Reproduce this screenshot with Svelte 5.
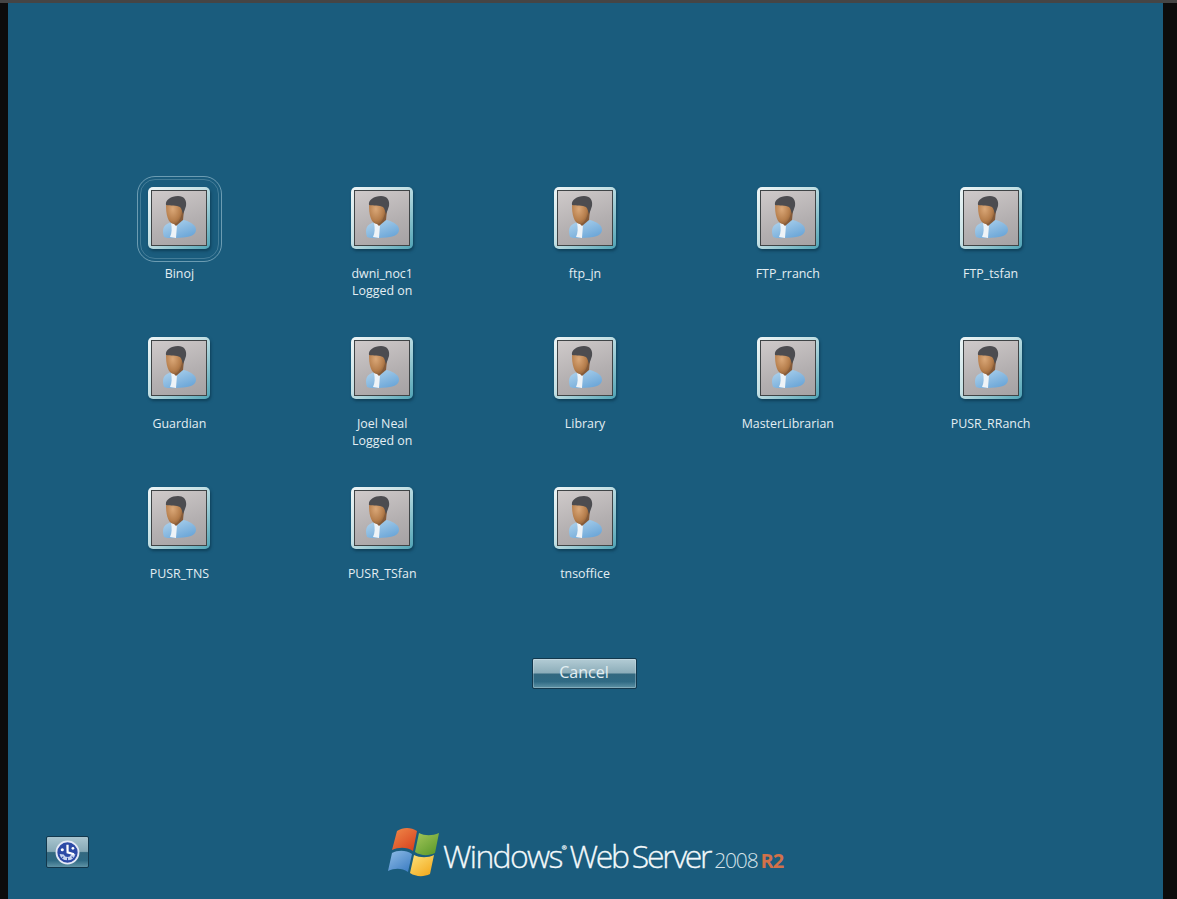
<script lang="ts">
  const users = [
    { name: 'Binoj', focused: true },
    { name: 'dwni_noc1', status: 'Logged on' },
    { name: 'ftp_jn' },
    { name: 'FTP_rranch' },
    { name: 'FTP_tsfan' },
    { name: 'Guardian' },
    { name: 'Joel Neal', status: 'Logged on' },
    { name: 'Library' },
    { name: 'MasterLibrarian' },
    { name: 'PUSR_RRanch' },
    { name: 'PUSR_TNS' },
    { name: 'PUSR_TSfan' },
    { name: 'tnsoffice' },
  ]
</script>

<div class="screen">
  <main class="desktop">
    <ul class="users">
      {#each users as user}
        <li class="user">
          <div class="tile" class:focused={user.focused}>
            <div class="picture">
              <svg viewBox="0 0 54 54" width="54" height="54" aria-hidden="true">
                <defs>
                  <radialGradient id="skin" cx="0.4" cy="0.42" r="0.7">
                    <stop offset="0" stop-color="#dba878" />
                    <stop offset="0.65" stop-color="#b57d4b" />
                    <stop offset="1" stop-color="#7d5533" />
                  </radialGradient>
                  <linearGradient id="shirt" x1="0" y1="0" x2="0.7" y2="1">
                    <stop offset="0" stop-color="#b4d6ee" />
                    <stop offset="1" stop-color="#6ba6d8" />
                  </linearGradient>
                </defs>
                <path d="M12 46c-2-6-1-11 3-13l6-3 11-1c7 2 12 5 12 10 0 3-3 6-9 7-8 1-19 2-23 0z" fill="url(#shirt)" />
                <path d="M19 32l4-1 2 3-1 13-6-1c2-4 2-9 1-14z" fill="#eef3f7" />
                <path d="M20 22l12-3-1 10-7 6-4-4z" fill="#855a38" />
                <path d="M14 15c0-5 4-8 9-8 5 0 8 4 8 10-1 8-4 16-9 16-6 0-8-10-8-18z" fill="url(#skin)" />
                <path d="M14 14c-1-5 5-9 12-9 6 0 9 4 8 10-1 3-2 6-3 8-1-3-1-5-3-7-3-2-10-1-14-2z" fill="#4c4c50" />
              </svg>
            </div>
          </div>
          <div class="name">{user.name}</div>
          {#if user.status}
            <div class="status">{user.status}</div>
          {/if}
        </li>
      {/each}
    </ul>

    <div class="actions">
      <button type="button" class="cancel">Cancel</button>
    </div>

    <footer class="footer">
      <button type="button" class="ease" aria-label="Ease of access">
        <svg viewBox="0 0 24 24" width="25" height="25" aria-hidden="true">
          <circle cx="12" cy="12" r="10.6" fill="#2d4aa6" stroke="#e4e9f6" stroke-width="1.7" />
          <path d="M4.4 13.4a7.8 7.8 0 0 0 15.2 0l-4 .4a3.9 3.9 0 0 1-7.2 0z" fill="#c9d5ef" />
          <path d="M8 16l-2 2M12 17v3M16 16l2 2" stroke="#2d4aa6" stroke-width="1" />
          <path d="M10.9 4.6h2.2v6.5l5.4 1.6-.6 2-6.8-2.1c-.1-3-.2-5-.2-8z" fill="#fff" />
          <circle cx="7" cy="9.4" r="1.5" fill="#fff" />
          <circle cx="17.2" cy="8" r="1.3" fill="#fff" />
        </svg>
      </button>
      <div class="brand">
        <svg class="flag" viewBox="0 0 52 50" width="52" height="50" aria-hidden="true">
          <defs>
            <linearGradient id="red" x1="0" y1="0" x2="0.8" y2="1">
              <stop offset="0" stop-color="#f08a4a" />
              <stop offset="1" stop-color="#d8431f" />
            </linearGradient>
            <linearGradient id="green" x1="0" y1="0" x2="0.8" y2="1">
              <stop offset="0" stop-color="#a4c75a" />
              <stop offset="1" stop-color="#5d9a2c" />
            </linearGradient>
            <linearGradient id="blue" x1="0" y1="0" x2="0.8" y2="1">
              <stop offset="0" stop-color="#8fbce6" />
              <stop offset="1" stop-color="#3f7fc4" />
            </linearGradient>
            <linearGradient id="yellow" x1="0" y1="0" x2="0.8" y2="1">
              <stop offset="0" stop-color="#fde27a" />
              <stop offset="1" stop-color="#f2a91f" />
            </linearGradient>
          </defs>
          <path d="M9 4c6-4 14-4 20 0l-4 20c-6-4-14-4-21-1z" fill="url(#red)" />
          <path d="M31 6c6 3 13 3 20 0l-4 20c-6 3-14 3-20-1z" fill="url(#green)" />
          <path d="M4 26c6-3 14-3 20 1l-4 18c-6-4-13-4-20-1z" fill="url(#blue)" />
          <path d="M26 28c6 3 14 3 20 0l-4 19c-6 3-14 3-20-1z" fill="url(#yellow)" />
        </svg>
        <span class="product">Windows<sup>®</sup> <span class="server">Web Server</span></span>
        <span class="year">2008</span>
        <span class="release">R2</span>
      </div>
    </footer>
  </main>
</div>

<style>
  :global(body) {
    margin: 0;
    background: #0c0c0c;
  }

  .screen {
    height: 899px;
    box-sizing: border-box;
    border-top: 3px solid #454545;
    padding: 0 14px 0 8px;
    overflow: hidden;
  }

  .desktop {
    height: 896px;
    display: flex;
    flex-direction: column;
    background: #1a5c7d;
    color: #fff;
    font-family: 'Open Sans', 'Noto Sans', sans-serif;
  }

  .users {
    list-style: none;
    margin: 0;
    padding: 184px 0 0 70px;
    display: grid;
    grid-template-columns: repeat(5, 202.8px);
    grid-auto-rows: 150px;
  }

  .user {
    display: flex;
    flex-direction: column;
    align-items: center;
    font-size: 12.4px;
    line-height: 17px;
    color: #e4eef3;
  }

  .tile {
    position: relative;
    width: 62px;
    height: 62px;
    box-sizing: border-box;
    padding: 4px;
    border-radius: 5px;
    background: linear-gradient(135deg, #eef5f6 0%, #c4e0e4 45%, #4fa3b5 100%);
    box-shadow: 1px 2px 3px rgba(6, 40, 58, 0.55);
  }

  .tile.focused::before,
  .tile.focused::after {
    content: '';
    position: absolute;
    border: 1px solid rgba(190, 220, 232, 0.5);
    pointer-events: none;
  }

  .tile.focused::before {
    inset: -11px -12px -13px -11px;
    border-radius: 18px;
  }

  .tile.focused::after {
    inset: -8px -9px -10px -8px;
    border-radius: 15px;
    border-color: rgba(190, 220, 232, 0.25);
  }

  .picture {
    width: 54px;
    height: 54px;
    border: 1px solid #3f4446;
    margin: -1px;
    background: linear-gradient(160deg, #cfcaca 0%, #b3afb0 60%, #a5a2a4 100%);
    overflow: hidden;
  }

  .picture svg {
    display: block;
  }

  .name {
    margin-top: 16px;
  }

  .actions {
    display: flex;
    justify-content: center;
    padding: 21px 3px 0 0;
  }

  .cancel {
    width: 105px;
    height: 31px;
    padding: 0 0 3px;
    border: 1px solid #12384d;
    border-radius: 2px;
    background: linear-gradient(#b3ccd5 0%, #8cadb9 48%, #33687f 52%, #2f6a84 78%, #5f93a6 100%);
    box-shadow: inset 0 0 0 1px rgba(225, 240, 245, 0.3);
    color: #e2eef2;
    font-family: inherit;
    font-size: 16px;
  }

  .footer {
    margin-top: auto;
    height: 74px;
    position: relative;
  }

  .ease {
    position: absolute;
    left: 38px;
    top: 11px;
    width: 43px;
    height: 32px;
    padding: 0;
    display: flex;
    align-items: center;
    justify-content: center;
    border: 1px solid #12384d;
    border-radius: 2px;
    background: linear-gradient(#a9c5cf 0%, #86a9b6 48%, #33687f 52%, #2f6a84 78%, #5f93a6 100%);
  }

  .brand {
    position: absolute;
    left: 380px;
    top: 2px;
    display: flex;
    align-items: baseline;
    white-space: nowrap;
    color: #f2f8fa;
  }

  .flag {
    align-self: flex-start;
    margin-right: 3px;
  }

  .product {
    font-size: 32px;
    font-weight: 300;
    letter-spacing: -1.7px;
    word-spacing: -2px;
    line-height: 58px;
    -webkit-text-stroke: 0.3px #f2f8fa;
  }

  .server {
    letter-spacing: -2.3px;
  }

  .product sup {
    font-size: 6px;
    vertical-align: 18px;
    line-height: 0;
  }

  .year {
    margin-left: 4px;
    font-size: 21px;
    font-weight: 300;
    letter-spacing: -1.2px;
    color: #d6e3e9;
  }

  .release {
    margin-left: 3px;
    font-size: 20px;
    font-weight: 700;
    letter-spacing: -0.8px;
    color: #d2714a;
  }
</style>
